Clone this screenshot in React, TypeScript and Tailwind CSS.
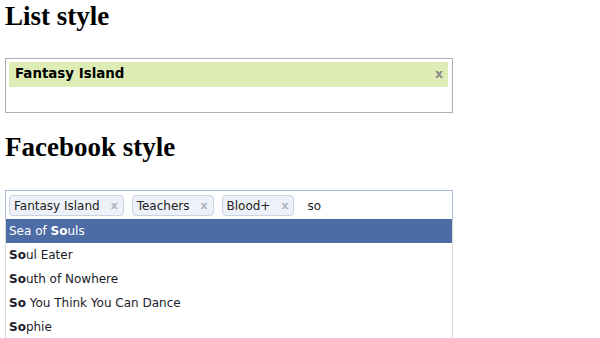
import React from "react";

const verdana = { fontFamily: '"DejaVu Sans", Verdana, sans-serif' };
const serif = { fontFamily: '"Liberation Serif", "Times New Roman", serif' };

function Token({ label }: { label: string }) {
  return (
    <span className="flex h-[21px] items-center rounded-[4px] border border-[#c9d3e6] bg-[#eef1f7] pl-[4px] pr-[5px] text-[12px] text-[#222]">
      <span>{label}</span>
      <span className="ml-[11px] w-[7px] text-center text-[11px] font-bold leading-none text-[#b0b5bf]">x</span>
    </span>
  );
}

function Row({ pre = "", bold, rest, selected }: { pre?: string; bold: string; rest: string; selected?: boolean }) {
  return (
    <div
      className={
        "h-[24px] whitespace-pre pl-[3px] text-[12px] leading-[24px] " +
        (selected ? "bg-[#4d6ca5] text-white" : "text-[#1a1a2a]")
      }
    >
      {pre}
      <b>{bold}</b>
      {rest}
    </div>
  );
}

export default function App() {
  return (
    <div className="bg-white px-[5px] pt-[1px] text-black" style={verdana}>
      <h1 className="m-0 h-[30px] text-[27px] font-bold leading-[30px]" style={serif}>
        List style
      </h1>
      <div className="mt-[27px] h-[55px] w-[448px] border border-[#b0b0b0] pl-[3px] pr-[4px] pt-[3px]">
        <div className="flex h-[25px] items-center justify-between bg-[#deedb6] pl-[6px] pr-[5px]">
          <span className="text-[13.4px] font-bold">Fantasy Island</span>
          <span className="text-[12.5px] font-bold text-[#8a8a8a]">x</span>
        </div>
      </div>
      <h1 className="m-0 mt-[19px] h-[30px] text-[27px] font-bold leading-[30px]" style={serif}>
        Facebook style
      </h1>
      <div className="mt-[28px] w-[448px]">
        <div className="flex h-[29px] items-center gap-[8px] border border-b-0 border-[#a7b8d8] pl-[3px] pt-[1px]">
          <Token label="Fantasy Island" />
          <Token label="Teachers" />
          <Token label="Blood+" />
          <span className="ml-[5px] text-[12px] text-[#222]">so</span>
        </div>
        <div className="border-x border-[#d8d8d8]">
          <Row pre="Sea of " bold="So" rest="uls" selected />
          <Row bold="So" rest="ul Eater" />
          <Row bold="So" rest="uth of Nowhere" />
          <Row bold="So" rest=" You Think You Can Dance" />
          <Row bold="So" rest="phie" />
        </div>
      </div>
    </div>
  );
}
